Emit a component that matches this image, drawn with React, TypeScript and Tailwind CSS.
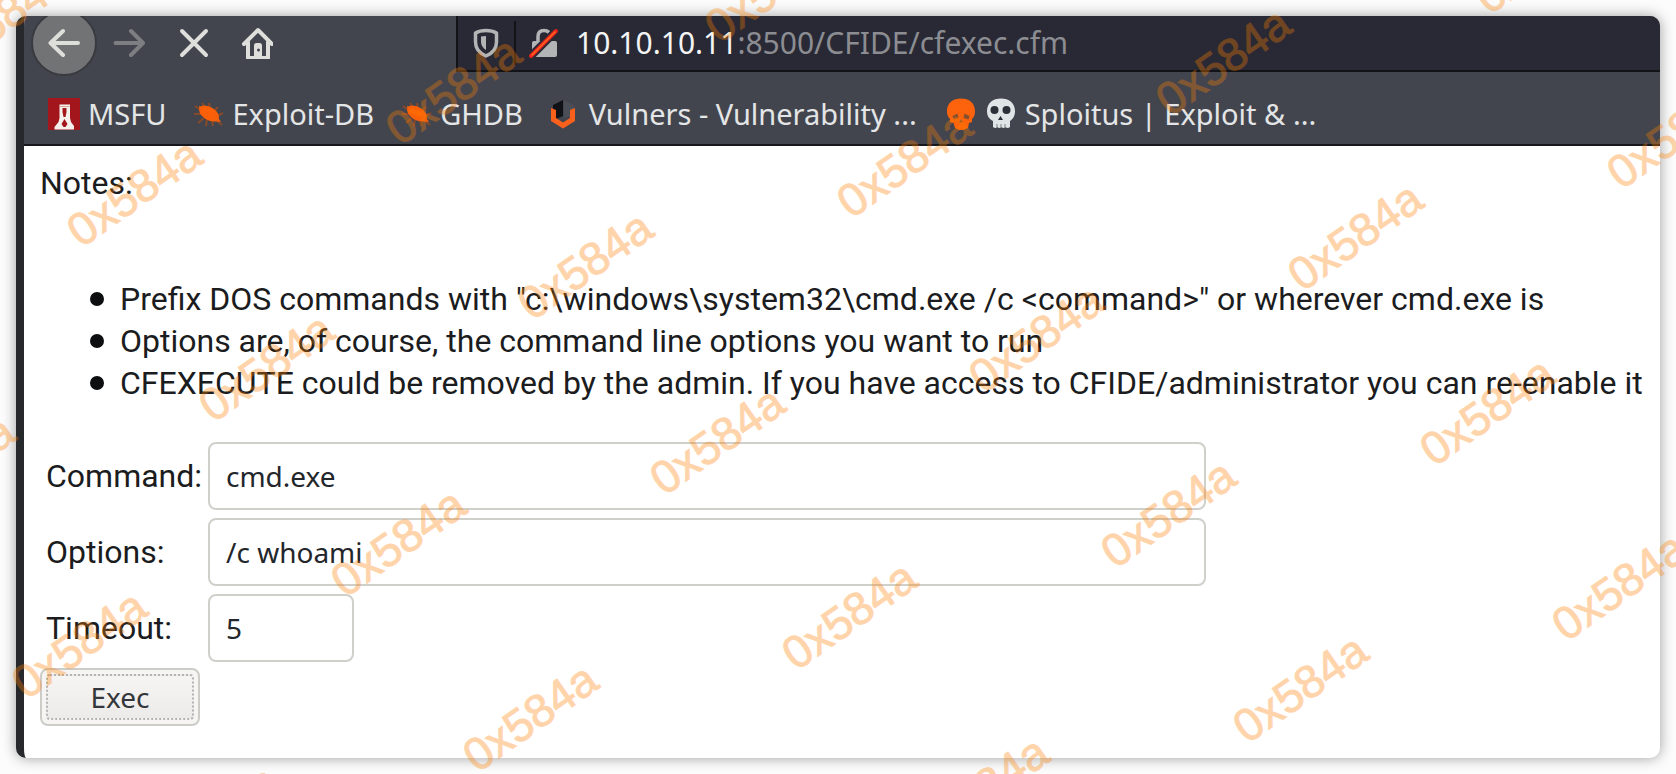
import type { ReactNode } from 'react';

type IconProps = { children: ReactNode };

function Icon({ children }: IconProps) {
  return (
    <svg viewBox="0 0 32 32" className="size-8 shrink-0" fill="none" aria-hidden="true">
      {children}
    </svg>
  );
}

function BackIcon() {
  return (
    <Icon>
      <path d="M15 4 L2.500 16 L15 28 M2.500 16 H30" stroke="#dededb" strokeWidth="4" strokeLinecap="round" strokeLinejoin="round" />
    </Icon>
  );
}

function ForwardIcon() {
  return (
    <Icon>
      <path d="M18 4 L30 16 L18 28 M30 16 H2.500" stroke="#7d7e81" strokeWidth="4" strokeLinecap="round" strokeLinejoin="round" />
    </Icon>
  );
}

function StopIcon() {
  return (
    <Icon>
      <path d="M5 4 L29 28 M29 4 L5 28" stroke="#dededb" strokeWidth="4" strokeLinecap="round" />
    </Icon>
  );
}

function HomeIcon() {
  return (
    <Icon>
      <path d="M3 17 L17 3 L31 17 M7 15 V31 H27 V15" stroke="#dededb" strokeWidth="4" strokeLinecap="round" strokeLinejoin="round" />
      <path d="M13 31 V18.500 Q13 16 15.500 16 H18.500 Q21 16 21 18.500 V31 Z" fill="#dededb" />
      <circle cx="17.500" cy="23" r="1.500" fill="#43454e" />
    </Icon>
  );
}

function ShieldIcon() {
  return (
    <Icon>
      <path d="M16 3.500 C12 3.500 8 4.500 5.500 6 V15 C5.500 22 10 26.500 16 29 C22 26.500 26.500 22 26.500 15 V6 C24 4.500 20 3.500 16 3.500 Z" stroke="#b3b4b6" strokeWidth="3.500" strokeLinejoin="round" />
      <path d="M16 9 V23 C13 21 11 18.500 11 15 V9.500 Z" fill="#b3b4b6" />
    </Icon>
  );
}

function InsecureLockIcon() {
  return (
    <Icon>
      <path d="M10 15 V9.500 C10 5.500 12.500 3.500 16 3.500 C19.500 3.500 22 5.500 22 9.500 V15" stroke="#b3b4b6" strokeWidth="3.500" />
      <rect x="4" y="14" width="25" height="16" rx="2" fill="#b3b4b6" />
      <path d="M1 31 L30 2" stroke="#282934" strokeWidth="8" />
      <path d="M3 29 L28 4" stroke="#e8231b" strokeWidth="4" strokeLinecap="round" />
      <path d="M4 28 L27 5" stroke="#ff6a1f" strokeWidth="1.500" strokeLinecap="round" />
    </Icon>
  );
}

function MsfuIcon() {
  return (
    <Icon>
      <rect width="32" height="32" fill="#a3161b" />
      <path d="M11.500 6.500 H22 V20 L23 24 L26 28 V31.500 H6.500 V29 L10.500 24 L11.500 20 Z" fill="#f4f0ec" />
      <path d="M14.500 10 H18.500 V14 L17.500 19 H15.500 L14.500 14 Z" fill="#a3161b" />
      <path d="M16.500 21 L19.500 26 L17.500 29 H15.500 L13.500 26 Z" fill="#a3161b" />
      <path d="M12 8.500 H21.500" stroke="#d0a59c" strokeWidth="1" />
    </Icon>
  );
}

function BugIcon() {
  return (
    <Icon>
      <path d="M3 8 L10 13 M2 16 H9 M10 5 L13 10 M17 5 L18 11 M26 9 L21 14 M31 15 L25 18 M6 25 L12 20 M14 28 L15 21 M21 28 L20 22 M30 27 L25 23" stroke="#86492a" strokeWidth="2" />
      <ellipse cx="17" cy="15.500" rx="11" ry="6.500" transform="rotate(32 17 15.500)" fill="#fb6008" />
      <path d="M22 14 L29 24 L20 23 Z M7 8 L12 9 L8 14 Z" fill="#f45f0c" />
    </Icon>
  );
}

function VulnersIcon() {
  return (
    <Icon>
      <path d="M14 2 V18 L7 21 L4 18 V7 Z" fill="#111215" />
      <path d="M15 2 L25 7.500 V18 L15 20 Z" fill="#4c4e55" />
      <path d="M2 10 L7 12 V20 L14 24.500 L21 20 V12 L26 10 V23 L14 30.500 L2 23 Z" fill="#f9601b" />
    </Icon>
  );
}

function OrangeSkullIcon() {
  return (
    <Icon>
      <path d="M18 0.500 C26 0.500 32 5 32 13 C32 17 31 19 29 21 V24 L26 25 L25 30 L20 32 H16 L12 30 L10.500 25 L7 24 V21 C5 19 4 17 4 13 C4 5 10 0.500 18 0.500 Z" fill="#fd620c" />
      <path d="M9.500 18 L14.500 15.500 L15.500 20 L10.500 21.500 Z M26.500 18 L21.500 15.500 L20.500 20 L25.500 21.500 Z" fill="#84502f" />
      <path d="M18 21 L20 24.500 H16 Z" fill="#84502f" />
    </Icon>
  );
}

function WhiteSkullIcon() {
  return (
    <Icon>
      <path d="M16 0.500 C24 0.500 30 5 30 13 C30 18 28 21 25 23 V29 Q22.500 31 20.500 29 Q18.500 31 16.500 29 Q14.500 31 12.500 29 Q10 31 8 29 V23 C4 21 2 18 2 13 C2 5 8 0.500 16 0.500 Z" fill="#dfe4e6" />
      <circle cx="9.500" cy="12" r="4" fill="#2b3038" />
      <circle cx="21.500" cy="12" r="4" fill="#2b3038" />
      <path d="M15.500 18 L18 22 H13 Z" fill="#2b3038" />
      <path d="M12 26 V30 M16 26 V30 M20 26 V30" stroke="#7d8389" strokeWidth="1" />
    </Icon>
  );
}

const bookmarks = [
  { label: 'MSFU', icon: <MsfuIcon /> },
  { label: 'Exploit-DB', icon: <BugIcon /> },
  { label: 'GHDB', icon: <BugIcon /> },
  { label: 'Vulners - Vulnerability ...', icon: <VulnersIcon /> },
];

const notes = [
  'Prefix DOS commands with "c:\\windows\\system32\\cmd.exe /c <command>" or wherever cmd.exe is',
  'Options are, of course, the command line options you want to run',
  'CFEXECUTE could be removed by the admin. If you have access to CFIDE/administrator you can re-enable it',
];

const WATERMARK = '0x584a';
const stamps: { x: number; y: number }[] = [];
for (let col = -3; col <= 7; col++) {
  for (let row = -3; row <= 7; row++) {
    const x = 134 + col * 319 + row * 132;
    const y = 192 - col * 102 + row * 175;
    if (x > -80 && x < 1760 && y > -60 && y < 840) stamps.push({ x, y });
  }
}

function Watermark() {
  return (
    <div aria-hidden="true" className="pointer-events-none absolute inset-0 overflow-hidden">
      {stamps.map((s) => (
        <span
          key={`${s.x},${s.y}`}
          className="absolute -translate-x-1/2 -translate-y-1/2 -rotate-[35deg] font-['Liberation_Sans',sans-serif] text-[46px] leading-none text-[#ff8000] opacity-33 [-webkit-text-stroke:1px_#ff8000]"
          style={{ left: s.x, top: s.y }}
        >
          {WATERMARK}
        </span>
      ))}
    </div>
  );
}

const field =
  "h-17 rounded-lg border-2 border-[#d0d0cb] bg-white px-4 font-['Noto_Sans',sans-serif] text-[28px] text-[#23262b] outline-none";

export default function App() {
  return (
    <div className="relative flex min-h-screen flex-col overflow-hidden bg-[#fcfcfc] p-4">
      <div className="flex flex-1 flex-col overflow-hidden rounded-[10px] border-l-8 border-[#27282c] bg-white shadow-[0_0_14px_rgba(0,0,0,0.38)]">
        <header className="border-b-2 border-[#17181d] bg-[#43454e] font-['Noto_Sans',sans-serif] text-[29px] leading-8 text-[#e4e5e6]">
          <div className="flex h-14">
            <nav className="flex w-[432px] shrink-0 items-center gap-4 pb-0.5 pl-[7px]">
              <button type="button" aria-label="Back" className="flex size-[66px] shrink-0 items-center justify-center rounded-full border-2 border-[#393a40] bg-[#727375]">
                <BackIcon />
              </button>
              <div className="flex items-center gap-8">
                <button type="button" aria-label="Forward"><ForwardIcon /></button>
                <button type="button" aria-label="Stop"><StopIcon /></button>
                <button type="button" aria-label="Home"><HomeIcon /></button>
              </div>
            </nav>
            <div className="flex min-w-0 flex-1 items-center border-b-2 border-l-2 border-[#121317] bg-[#282934] pl-3">
              <ShieldIcon />
              <span className="mx-3 h-11 w-0.5 bg-[#121317]" />
              <InsecureLockIcon />
              <p className="whitespace-nowrap pl-4 text-[30px] text-[#8c8d92]">
                <span className="text-[#f4f4f5]">10.10.10.11</span>:8500/CFIDE/cfexec.cfm
              </p>
            </div>
          </div>
          <div className="flex h-18 items-center gap-[26px] whitespace-nowrap pl-6 pt-3">
            {bookmarks.map((b) => (
              <a key={b.label} href="#" className="flex items-center gap-2">
                {b.icon}
                {b.label}
              </a>
            ))}
            <a href="#" className="flex items-center gap-2.5">
              <OrangeSkullIcon />
              <span className="flex items-center gap-2">
                <WhiteSkullIcon />
                {'Sploitus | Exploit & ...'}
              </span>
            </a>
          </div>
        </header>

        <main className="px-4 pb-8 pt-4 font-['Roboto',sans-serif] text-[32px] leading-[42px] text-[#1b1c20]">
          <p>Notes:</p>
          <ul className="-mr-4 mt-[74px] whitespace-nowrap">
            {notes.map((n) => (
              <li key={n} className="flex items-center gap-4 pl-[50px]">
                <span className="size-3.5 shrink-0 rounded-full bg-[#0d0e10]" />
                {n}
              </li>
            ))}
          </ul>
          <form className="mt-[38px]" onSubmit={(e) => e.preventDefault()}>
            <div className="grid grid-cols-[162px_minmax(0,998px)] items-center gap-y-2 pl-1.5">
              <label htmlFor="command">Command:</label>
              <input id="command" type="text" defaultValue="cmd.exe" className={field} />
              <label htmlFor="options">Options:</label>
              <input id="options" type="text" defaultValue="/c whoami" className={field} />
              <label htmlFor="timeout">Timeout:</label>
              <input id="timeout" type="text" defaultValue="5" className={`${field} w-[146px]`} />
            </div>
            <button
              type="submit"
              className="mt-1.5 flex h-[58px] w-40 rounded-lg border-2 border-[#cdcdc8] bg-[#f6f5f4] p-1 font-['Noto_Sans',sans-serif] text-[28px] text-[#33373c]"
            >
              <span className="flex h-full w-full items-center justify-center rounded-sm border-2 border-dotted border-[#b4b4b1] bg-linear-to-b from-[#f6f5f4] to-[#ecebe9]">
                Exec
              </span>
            </button>
          </form>
        </main>
      </div>
      <Watermark />
    </div>
  );
}
